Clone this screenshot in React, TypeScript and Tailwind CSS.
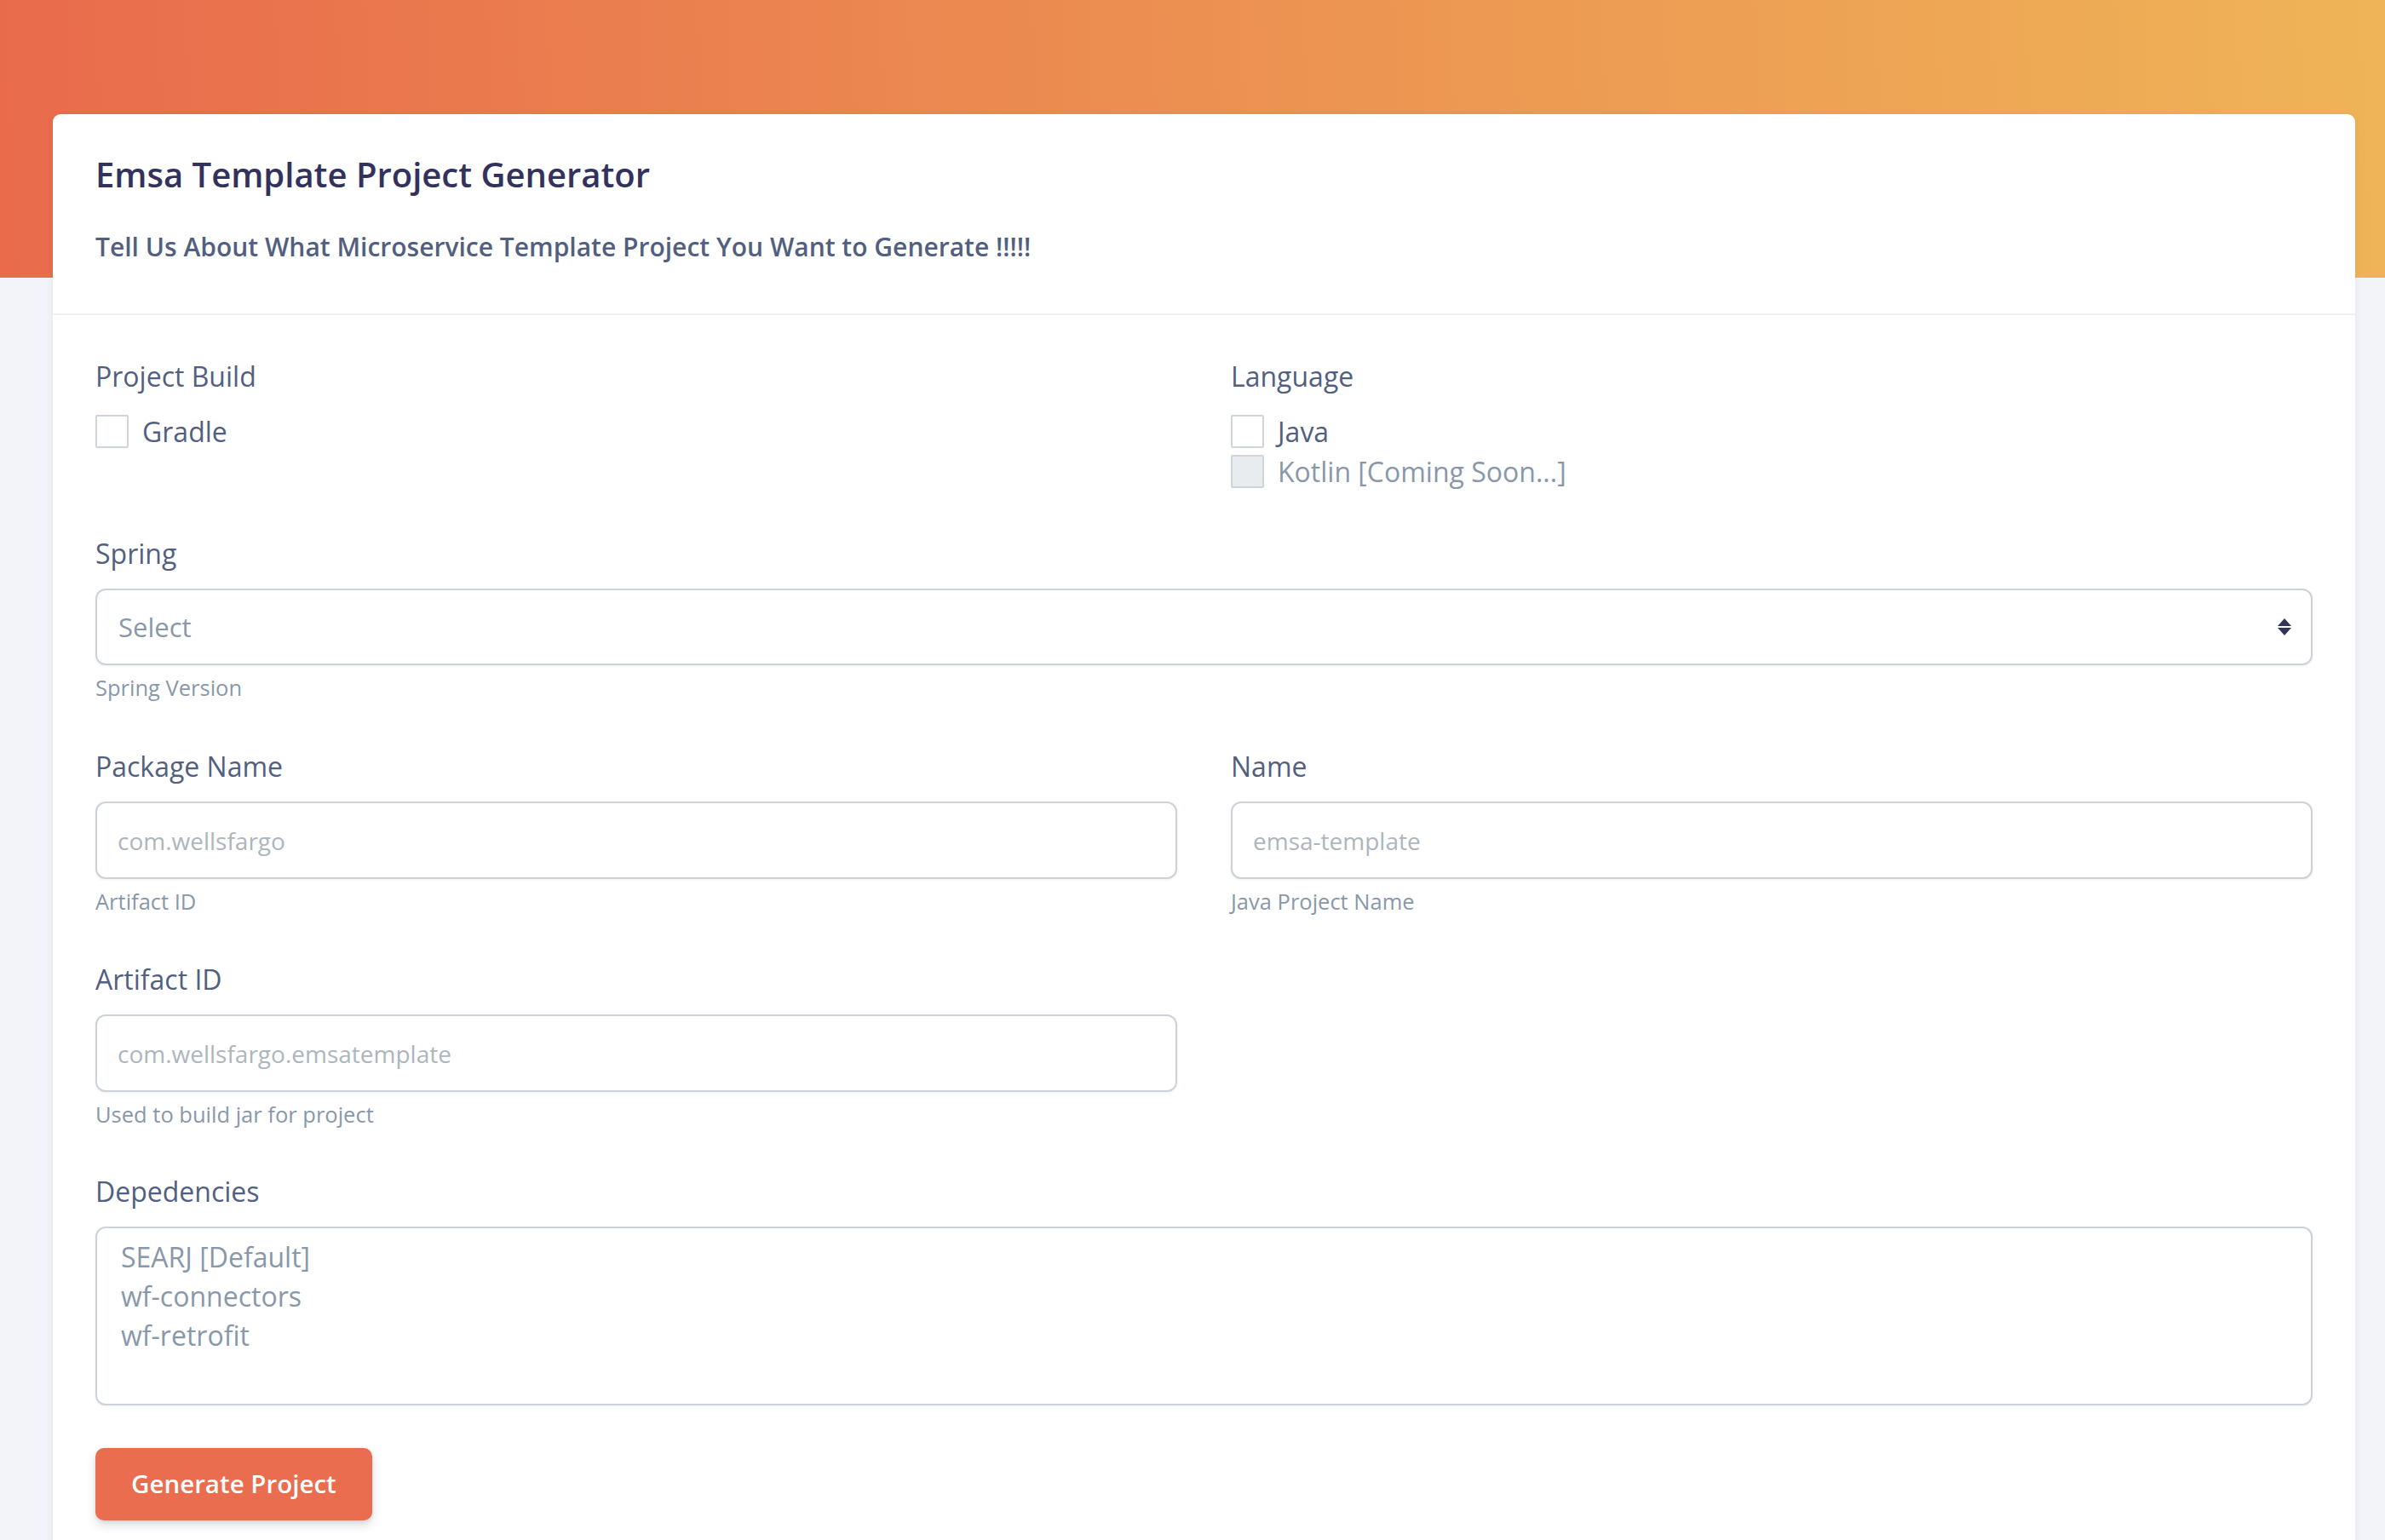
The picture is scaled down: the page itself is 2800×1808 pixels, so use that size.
import React from 'react';

const Label = ({ children }: { children: React.ReactNode }) => (
  <div className="text-[32px] leading-[40px] text-[#525f7f]">{children}</div>
);

const Help = ({ children }: { children: React.ReactNode }) => (
  <div className="mt-[10px] text-[25.5px] leading-[32px] text-[#8898aa]">{children}</div>
);

const Check = ({ label, disabled }: { label: string; disabled?: boolean }) => (
  <label className="flex h-[47px] items-center gap-[16px]">
    <span
      className={
        disabled
          ? 'h-[39px] w-[39px] rounded-[2px] border-2 border-[#cfd4da] bg-[#e9ecef]'
          : 'h-[39px] w-[39px] rounded-[2px] border-2 border-[#cfd4da] bg-white'
      }
    />
    <span className={disabled ? 'text-[32px] text-[#8898aa]' : 'text-[32px] text-[#525f7f]'}>{label}</span>
  </label>
);

const TextField = ({ placeholder }: { placeholder: string }) => (
  <input
    placeholder={placeholder}
    className="mt-[21px] block h-[91px] w-full rounded-[12px] border-2 border-[#cdd2d9] bg-white px-[24px] text-[28px] text-[#525f7f] shadow-[0_1px_3px_rgba(50,50,93,0.08)] outline-none placeholder:text-[#adb5bd]"
  />
);

export default function App() {
  return (
    <div className="min-h-screen bg-[#f3f4f9] font-['Open_Sans',sans-serif]">
      <div className="h-[326px] bg-[linear-gradient(87deg,#e96b4c_0%,#efb457_100%)]" />

      <div className="-mt-[192px] ml-[62px] mr-[35px] rounded-[9px] bg-white shadow-[0_2px_8px_rgba(50,50,93,0.08)]">
        {/* header */}
        <div className="border-b-2 border-[#eef0f3] px-[50px] pb-[58px] pt-[47px]">
          <h1 className="text-[40px] font-semibold leading-[47px] text-[#32325d]">Emsa Template Project Generator</h1>
          <p className="mt-[42px] text-[30px] font-semibold leading-[40px] text-[#525f7f]">
            Tell Us About What Microservice Template Project You Want to Generate !!!!!
          </p>
        </div>

        {/* body */}
        <div className="px-[50px] pb-[80px] pt-[52px]">
          <div className="grid grid-cols-2 gap-x-[63px]">
            <div>
              <Label>Project Build</Label>
              <div className="mt-[21px]">
                <Check label="Gradle" />
              </div>
            </div>
            <div>
              <Label>Language</Label>
              <div className="mt-[21px]">
                <Check label="Java" />
                <Check label="Kotlin [Coming Soon...]" disabled />
              </div>
            </div>
          </div>

          <div className="mt-[53px]">
            <Label>Spring</Label>
            <div className="mt-[21px] flex h-[90px] items-center justify-between rounded-[12px] border-2 border-[#cdd2d9] bg-white pl-[25px] pr-[23px] shadow-[0_1px_3px_rgba(50,50,93,0.08)]">
              <span className="text-[31px] text-[#8898aa]">Select</span>
              <svg width="16" height="20" viewBox="0 0 16 20" fill="#32325d">
                <path d="M8 0 L16 9 L0 9 Z" />
                <path d="M0 11 L16 11 L8 20 Z" />
              </svg>
            </div>
            <Help>Spring Version</Help>
          </div>

          <div className="mt-[57px] grid grid-cols-2 gap-x-[63px]">
            <div>
              <Label>Package Name</Label>
              <TextField placeholder="com.wellsfargo" />
              <Help>Artifact ID</Help>
            </div>
            <div>
              <Label>Name</Label>
              <TextField placeholder="emsa-template" />
              <Help>Java Project Name</Help>
            </div>
          </div>

          <div className="mt-[56px] grid grid-cols-2 gap-x-[63px]">
            <div>
              <Label>Artifact ID</Label>
              <TextField placeholder="com.wellsfargo.emsatemplate" />
              <Help>Used to build jar for project</Help>
            </div>
            <div />
          </div>

          <div className="mt-[55px]">
            <Label>Depedencies</Label>
            <div className="mt-[21px] h-[210px] rounded-[12px] border-2 border-[#cdd2d9] bg-white px-[28px] pt-[11px] text-[32px] leading-[46px] text-[#8898aa] shadow-[0_1px_3px_rgba(50,50,93,0.08)]">
              <div>SEARJ [Default]</div>
              <div>wf-connectors</div>
              <div>wf-retrofit</div>
            </div>
          </div>

          <button className="mt-[50px] h-[85px] rounded-[10px] bg-[#e96d4e] px-[42px] text-[29.5px] font-semibold text-white shadow-[0_6px_12px_rgba(50,50,93,0.15),0_2px_4px_rgba(0,0,0,0.08)]">
            Generate Project
          </button>
        </div>
      </div>
    </div>
  );
}
